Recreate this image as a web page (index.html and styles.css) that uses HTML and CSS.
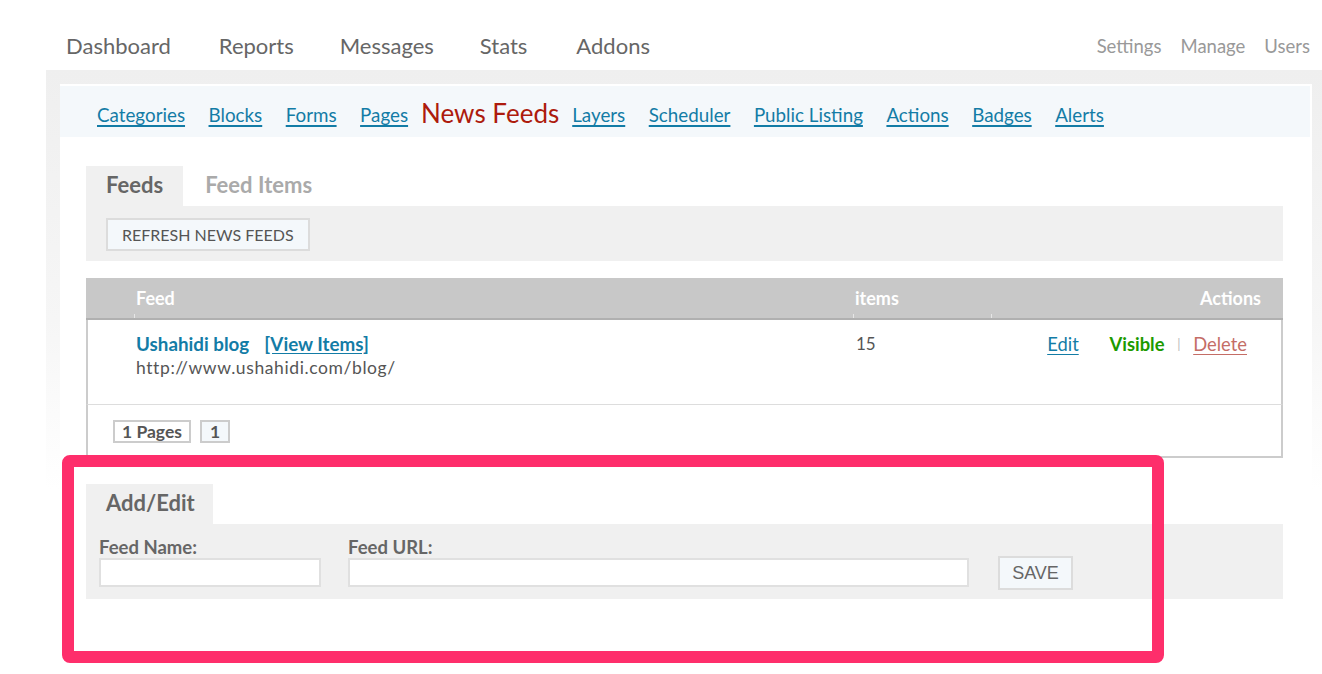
FILE: index.html
```html
<!DOCTYPE html>
<html>
<head>
<meta charset="utf-8">
<link rel="stylesheet" href="styles.css">
</head>
<body>
<div class="topbar">
  <nav class="mainnav">
    <a>Dashboard</a>
    <a>Reports</a>
    <a>Messages</a>
    <a>Stats</a>
    <a>Addons</a>
  </nav>
  <nav class="usernav">
    <a>Settings</a>
    <a>Manage</a>
    <a>Users</a>
  </nav>
</div>

<div class="wrapper">
  <div class="panel">
    <div class="subnav">
      <a class="sublink">Categories</a>
      <a class="sublink">Blocks</a>
      <a class="sublink">Forms</a>
      <a class="sublink">Pages</a>
      <span class="current">News Feeds</span>
      <a class="sublink">Layers</a>
      <a class="sublink">Scheduler</a>
      <a class="sublink">Public Listing</a>
      <a class="sublink">Actions</a>
      <a class="sublink">Badges</a>
      <a class="sublink">Alerts</a>
    </div>

    <div class="content">
      <div class="tabs">
        <span class="tab active">Feeds</span>
        <span class="tab">Feed Items</span>
      </div>
      <div class="band toolbar">
        <button class="btn">REFRESH NEWS FEEDS</button>
      </div>

      <div class="table">
        <div class="thead">
          <div class="c-check"></div>
          <div class="c-feed">Feed</div>
          <div class="c-items">items</div>
          <div class="c-actions">Actions</div>
        </div>
        <div class="row">
          <div class="c-check"></div>
          <div class="c-feed">
            <div class="feedline"><span class="feedname">Ushahidi blog</span><a class="viewitems">[View Items]</a></div>
            <div class="url">http://www.ushahidi.com/blog/</div>
          </div>
          <div class="c-items">15</div>
          <div class="c-actions">
            <a class="act-edit">Edit</a>
            <span class="act-visible">Visible</span>
            <span class="sep">|</span>
            <a class="act-delete">Delete</a>
          </div>
        </div>
        <div class="pager">
          <span class="pg">1 Pages</span>
          <span class="pg pg-num">1</span>
        </div>
      </div>

      <div class="tabs addtabs">
        <span class="tab active">Add/Edit</span>
      </div>
      <div class="band form">
        <label class="field">
          <span class="lbl">Feed Name:</span>
          <input class="inp inp-name" type="text">
        </label>
        <label class="field">
          <span class="lbl">Feed URL:</span>
          <input class="inp inp-url" type="text">
        </label>
        <button class="btn save">SAVE</button>
      </div>
    </div>
  </div>
</div>

<div class="highlight"></div>
</body>
</html>
```
FILE: styles.css
```css
* { box-sizing: border-box; }
html, body { margin: 0; padding: 0; background: #fff; }
body {
  font-family: Lato, "Liberation Sans", sans-serif;
  color: #666;
  position: relative;
  overflow: hidden;
  height: 674px;
}
a { cursor: pointer; }

.topbar {
  height: 70px;
  display: flex;
  justify-content: space-between;
  align-items: center;
  padding: 20px 12px 0 66px;
}
.mainnav { display: flex; gap: 46px; }
.mainnav a { font-size: 22px; color: #666; }
.mainnav a:nth-child(2) { margin-left: 2px; }
.mainnav a:nth-child(5) { margin-left: 3px; }
.usernav { display: flex; gap: 19px; padding-top: 2px; }
.usernav a { font-size: 18.5px; color: #999; }

.wrapper {
  margin-left: 46px;
  width: 1290px;
  padding: 14px 14px 0 14px;
  background: linear-gradient(#efefef 0px, #f6f6f6 250px, #fff 420px);
  height: 604px;
}
.panel {
  background: #fff;
  width: 1252px;
  height: 100%;
  padding: 2px 2px 0 0;
}
.subnav {
  height: 51px;
  background: #f4f8fb;
  display: flex;
  align-items: center;
  padding: 6px 0 0 37px;
  gap: 23.5px;
}
.sublink {
  font-size: 18.8px;
  color: #137ca6;
  text-decoration: underline;
  text-decoration-thickness: 2px;
  text-underline-offset: 3px;
}
.current {
  font-size: 26px;
  color: #ad1b0d;
  margin: -4px -10.5px 0 -10.5px;
}

.content { padding: 29px 27px 0 26px; }

.tabs { display: flex; height: 40px; }
.tab {
  font-size: 22px;
  font-weight: 700;
  color: #aaa;
  padding: 0 21px 0 22px;
  line-height: 38px;
}
.tab.active { background: #f0f0f0; color: #666; padding: 0 20px; }

.band { background: #f0f0f0; }
.toolbar { height: 55px; padding: 12px 20px 0; }
.btn {
  font-family: Lato, "Liberation Sans", sans-serif;
  background: #f4f8fb;
  border: 2px solid #dcdcdc;
  color: #555;
  font-size: 16px;
  height: 33px;
  padding: 0 14px;
  margin: 0;
}

.table {
  margin-top: 17px;
  width: 1197px;
  border-bottom: 2px solid #ccc;
}
.thead {
  display: flex;
  height: 42px;
  background: #c8c8c8;
  border-bottom: 2px solid #b0b0b0;
  color: #fff;
  font-weight: 700;
  font-size: 18px;
  line-height: 40px;
}
.c-check { width: 48px; flex: none; }
.c-feed { width: 719px; flex: none; padding-left: 2px; }
.c-items { width: 138px; flex: none; padding-left: 2px; }
.c-actions { flex: 1; text-align: right; padding-right: 22px; }
.thead .c-feed, .thead .c-items, .thead .c-actions {
  background: linear-gradient(#e6e6e6, #e6e6e6) left bottom / 1px 4px no-repeat;
}

.row {
  display: flex;
  height: 85px;
  border-left: 2px solid #ccc;
  border-right: 2px solid #ccc;
  border-bottom: 1px solid #ddd;
  padding-top: 12px;
  font-size: 17px;
  line-height: 24px;
}
.row .c-check { width: 46px; }
.feedline { font-size: 18.8px; font-weight: 700; }
.feedname { color: #137ca6; }
.viewitems {
  color: #137ca6;
  text-decoration: underline;
  text-underline-offset: 2px;
  margin-left: 15px;
}
.url { color: #555; letter-spacing: 0.6px; font-size: 17.5px; }
.row .c-items { color: #555; padding-left: 3px; }
.row .c-actions { padding-right: 34px; font-size: 18.4px; }
.act-edit { color: #137ca6; text-decoration: underline; text-underline-offset: 3px; }
.act-visible { color: #1c9a00; font-weight: 700; margin-left: 26px; }
.sep { color: #bbb; font-size: 13px; margin: 0 8px 0 8px; vertical-align: 2px; }
.act-delete { color: #c46d66; text-decoration: underline; text-underline-offset: 3px; }

.pager {
  height: 51px;
  border-left: 2px solid #ccc;
  border-right: 2px solid #ccc;
  display: flex;
  align-items: flex-start;
  padding: 15px 0 0 25px;
  gap: 9px;
}
.pg {
  border: 2px solid #ccc;
  font-weight: 700;
  font-size: 17.5px;
  color: #555;
  height: 23px;
  line-height: 19px;
  padding: 0 7px;
  background: #fff;
}
.pg-num { background: #f4f8fb; padding: 0 8px; }

.addtabs { margin-top: 26px; }
.addtabs .tab { padding: 0 18px 0 20px; }
.form {
  height: 75px;
  display: flex;
  align-items: flex-start;
  padding: 13px 0 0 13px;
  gap: 27px;
}
.field { display: flex; flex-direction: column; }
.lbl { font-size: 18.5px; font-weight: 700; color: #666; line-height: 21px; }
.inp {
  height: 29px;
  border: 2px solid #e0e0e0;
  background: #fff;
  margin: 0;
  padding: 0 4px;
}
.inp-name { width: 222px; }
.inp-url { width: 621px; }
.btn.save {
  font-family: "Liberation Sans", Arial, sans-serif;
  font-size: 18px;
  color: #666;
  margin-top: 19px;
  height: 34px;
  width: 75px;
  padding: 0;
  margin-left: 2px;
}

.highlight {
  position: absolute;
  left: 62px;
  top: 455px;
  width: 1102px;
  height: 208px;
  border: 12px solid #fe2e6b;
  border-radius: 8px;
  pointer-events: none;
}
```
